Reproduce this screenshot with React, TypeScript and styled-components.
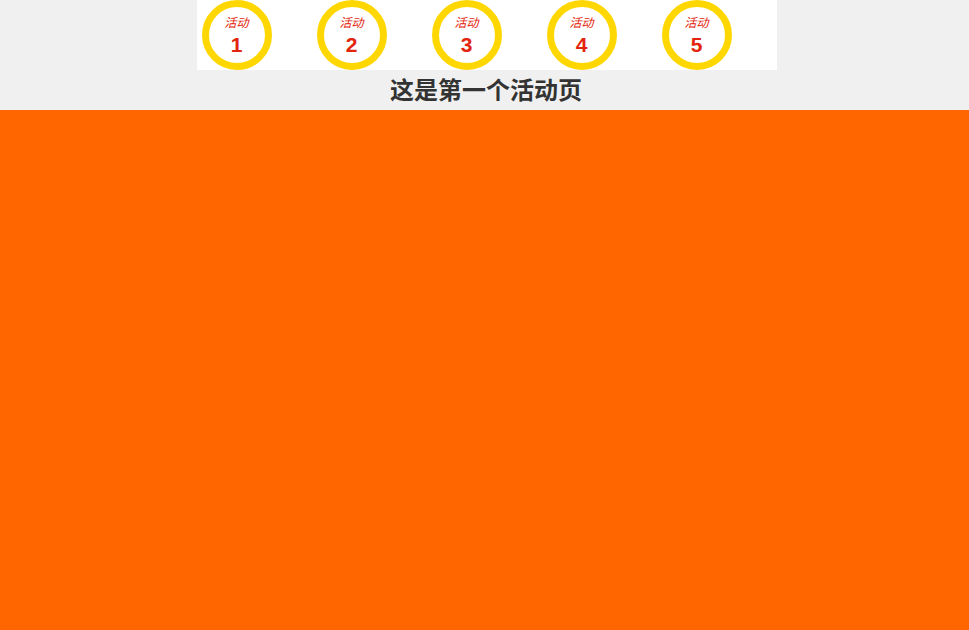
import styled, { createGlobalStyle } from 'styled-components';

const GlobalStyle = createGlobalStyle`
  html, body {
    margin: 0;
    padding: 0;
    height: 100%;
    background: #f0f0f0;
    font-family: "Liberation Sans", Arial, "Noto Sans CJK SC", sans-serif;
  }
  #root {
    min-height: 100%;
    display: flex;
    flex-direction: column;
  }
`;

const Page = styled.div`
  flex: 1;
  display: flex;
  flex-direction: column;
  min-height: 100vh;
`;

const Nav = styled.ul`
  list-style: none;
  margin: 0 auto;
  padding: 0 0 0 5px;
  width: 580px;
  height: 70px;
  box-sizing: border-box;
  background: #fff;
  display: flex;
  position: relative;
  left: 2px;
`;

const NavItem = styled.li`
  width: 70px;
  height: 70px;
  margin-right: 45px;
  box-sizing: border-box;
  border: 7px solid #ffd700;
  border-radius: 50%;
  display: flex;
  flex-direction: column;
  align-items: center;
  justify-content: center;
  color: #e3240c;
  cursor: pointer;
`;

const ItemLabel = styled.span`
  font-size: 12px;
  font-style: italic;
  line-height: 14px;
  margin-top: 1px;
`;

const ItemNumber = styled.span`
  font-size: 21px;
  font-weight: bold;
  line-height: 22px;
  margin-top: 4px;
`;

const Title = styled.h2`
  margin: 0;
  height: 40px;
  padding-left: 3px;
  line-height: 41px;
  text-align: center;
  font-size: 24px;
  font-weight: bold;
  color: #333;
`;

const Stage = styled.div`
  flex: 1;
  background: #ff6600;
`;

const items = [1, 2, 3, 4, 5];

export default function App() {
  return (
    <Page>
      <GlobalStyle />
      <Nav>
        {items.map((n) => (
          <NavItem key={n}>
            <ItemLabel>活动</ItemLabel>
            <ItemNumber>{n}</ItemNumber>
          </NavItem>
        ))}
      </Nav>
      <Title>这是第一个活动页</Title>
      <Stage />
    </Page>
  );
}
